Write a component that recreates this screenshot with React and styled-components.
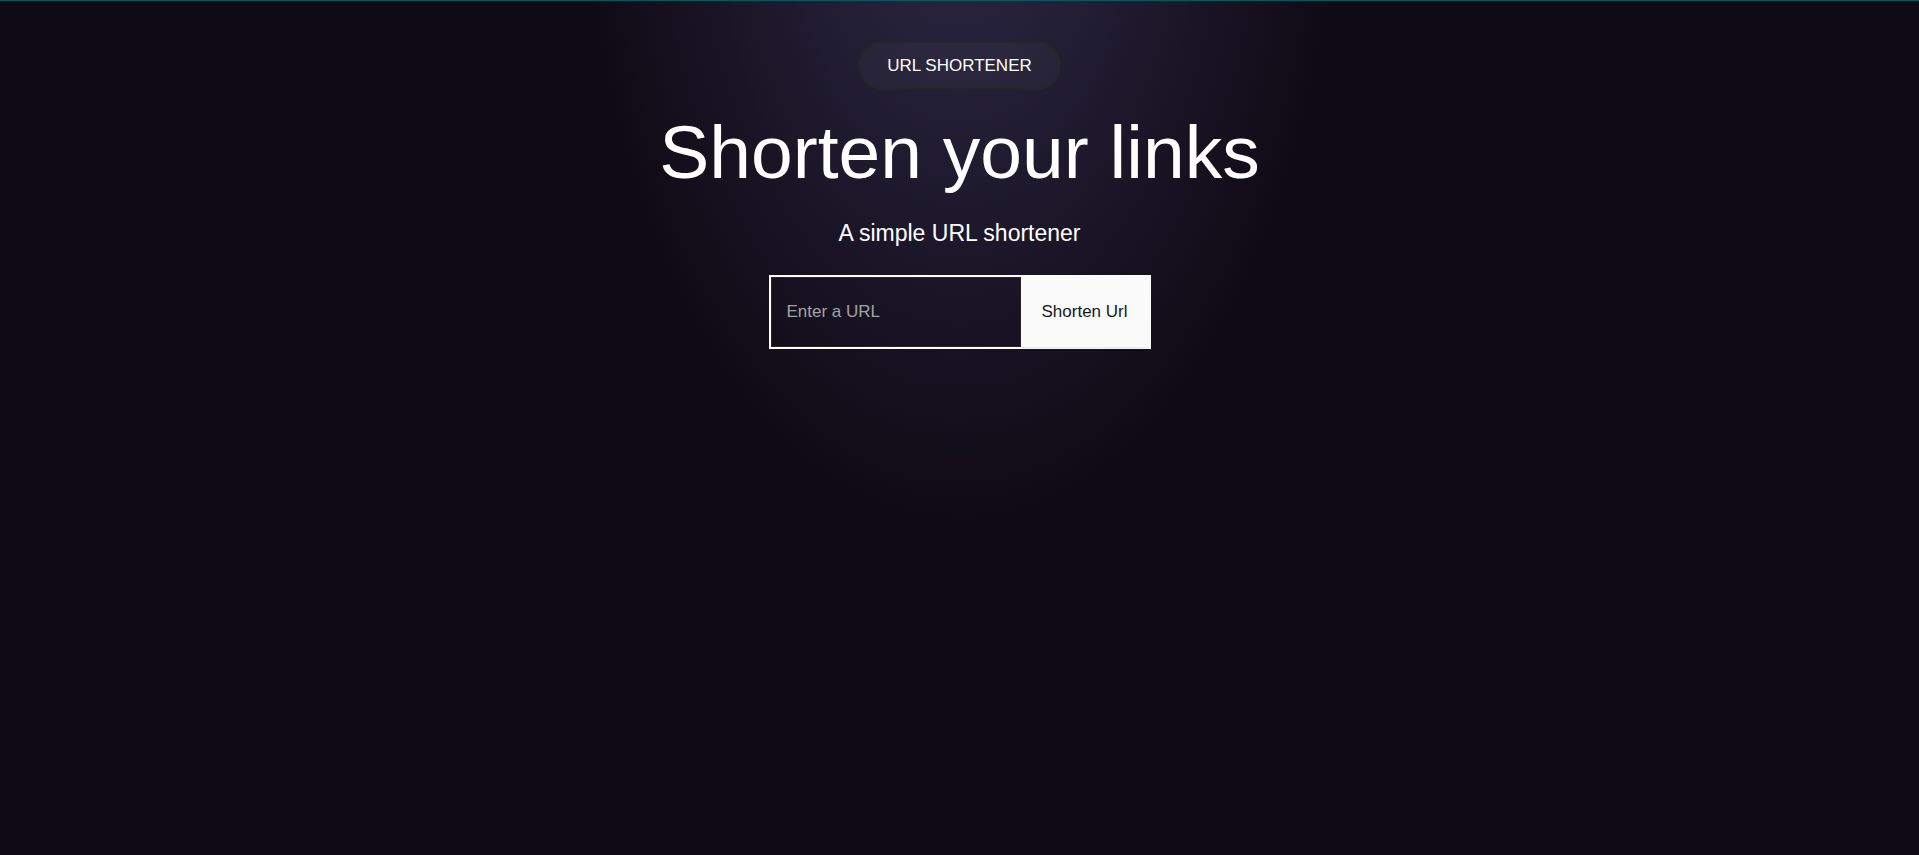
import React from "react";
import styled, { createGlobalStyle } from "styled-components";

const GlobalStyle = createGlobalStyle`
  *, *::before, *::after { box-sizing: border-box; }
  body {
    margin: 0;
    background: #0f0a14;
    color: #ffffff;
    font-family: "Liberation Sans", Arial, sans-serif;
  }
`;

const Page = styled.main`
  min-height: 100vh;
  display: flex;
  flex-direction: column;
  align-items: center;
  padding: 40px 16px;
  border-top: 1px solid #035a60;
  background: radial-gradient(
    ellipse 20% 82% at 50% -20%,
    rgba(120, 119, 198, 0.3),
    rgba(255, 255, 255, 0)
  );
`;

const Badge = styled.span`
  padding: 12px 27px;
  border: 2px solid #262626;
  border-radius: 24px;
  background: rgba(255, 255, 255, 0.03);
  font-size: 17px;
  line-height: 21px;
`;

const Title = styled.h1`
  margin: 24px 0 0;
  font-size: 75px;
  font-weight: 400;
  line-height: 77px;
  text-align: center;
`;

const Subtitle = styled.p`
  margin: 24px 0;
  font-size: 23px;
  line-height: 36px;
  text-align: center;
`;

const Form = styled.form`
  display: flex;
  height: 74px;
  max-width: 100%;
  border: 2px solid #ffffff;
`;

const UrlInput = styled.input`
  width: 250px;
  min-width: 0;
  padding: 8px 15px;
  border: 1px solid #262626;
  border-radius: 0;
  outline: none;
  background: transparent;
  color: #fafafa;
  font-family: inherit;
  font-size: 17px;
  &::placeholder { color: #a3a3a3; opacity: 1; }
`;

const SubmitButton = styled.button`
  flex: none;
  width: 128px;
  padding: 0;
  border: 0;
  background: #fafafa;
  box-shadow: 0 1px 2px rgba(0, 0, 0, 0.12);
  color: #171717;
  font-family: inherit;
  font-size: 17px;
  cursor: pointer;
`;

export default function App() {
  return (
    <>
      <GlobalStyle />
      <Page>
        <Badge>URL SHORTENER</Badge>
        <Title>Shorten your links</Title>
        <Subtitle>A simple URL shortener</Subtitle>
        <Form onSubmit={(event) => event.preventDefault()}>
          <UrlInput type="text" name="url" placeholder="Enter a URL" aria-label="Enter a URL" />
          <SubmitButton type="submit">Shorten Url</SubmitButton>
        </Form>
      </Page>
    </>
  );
}
